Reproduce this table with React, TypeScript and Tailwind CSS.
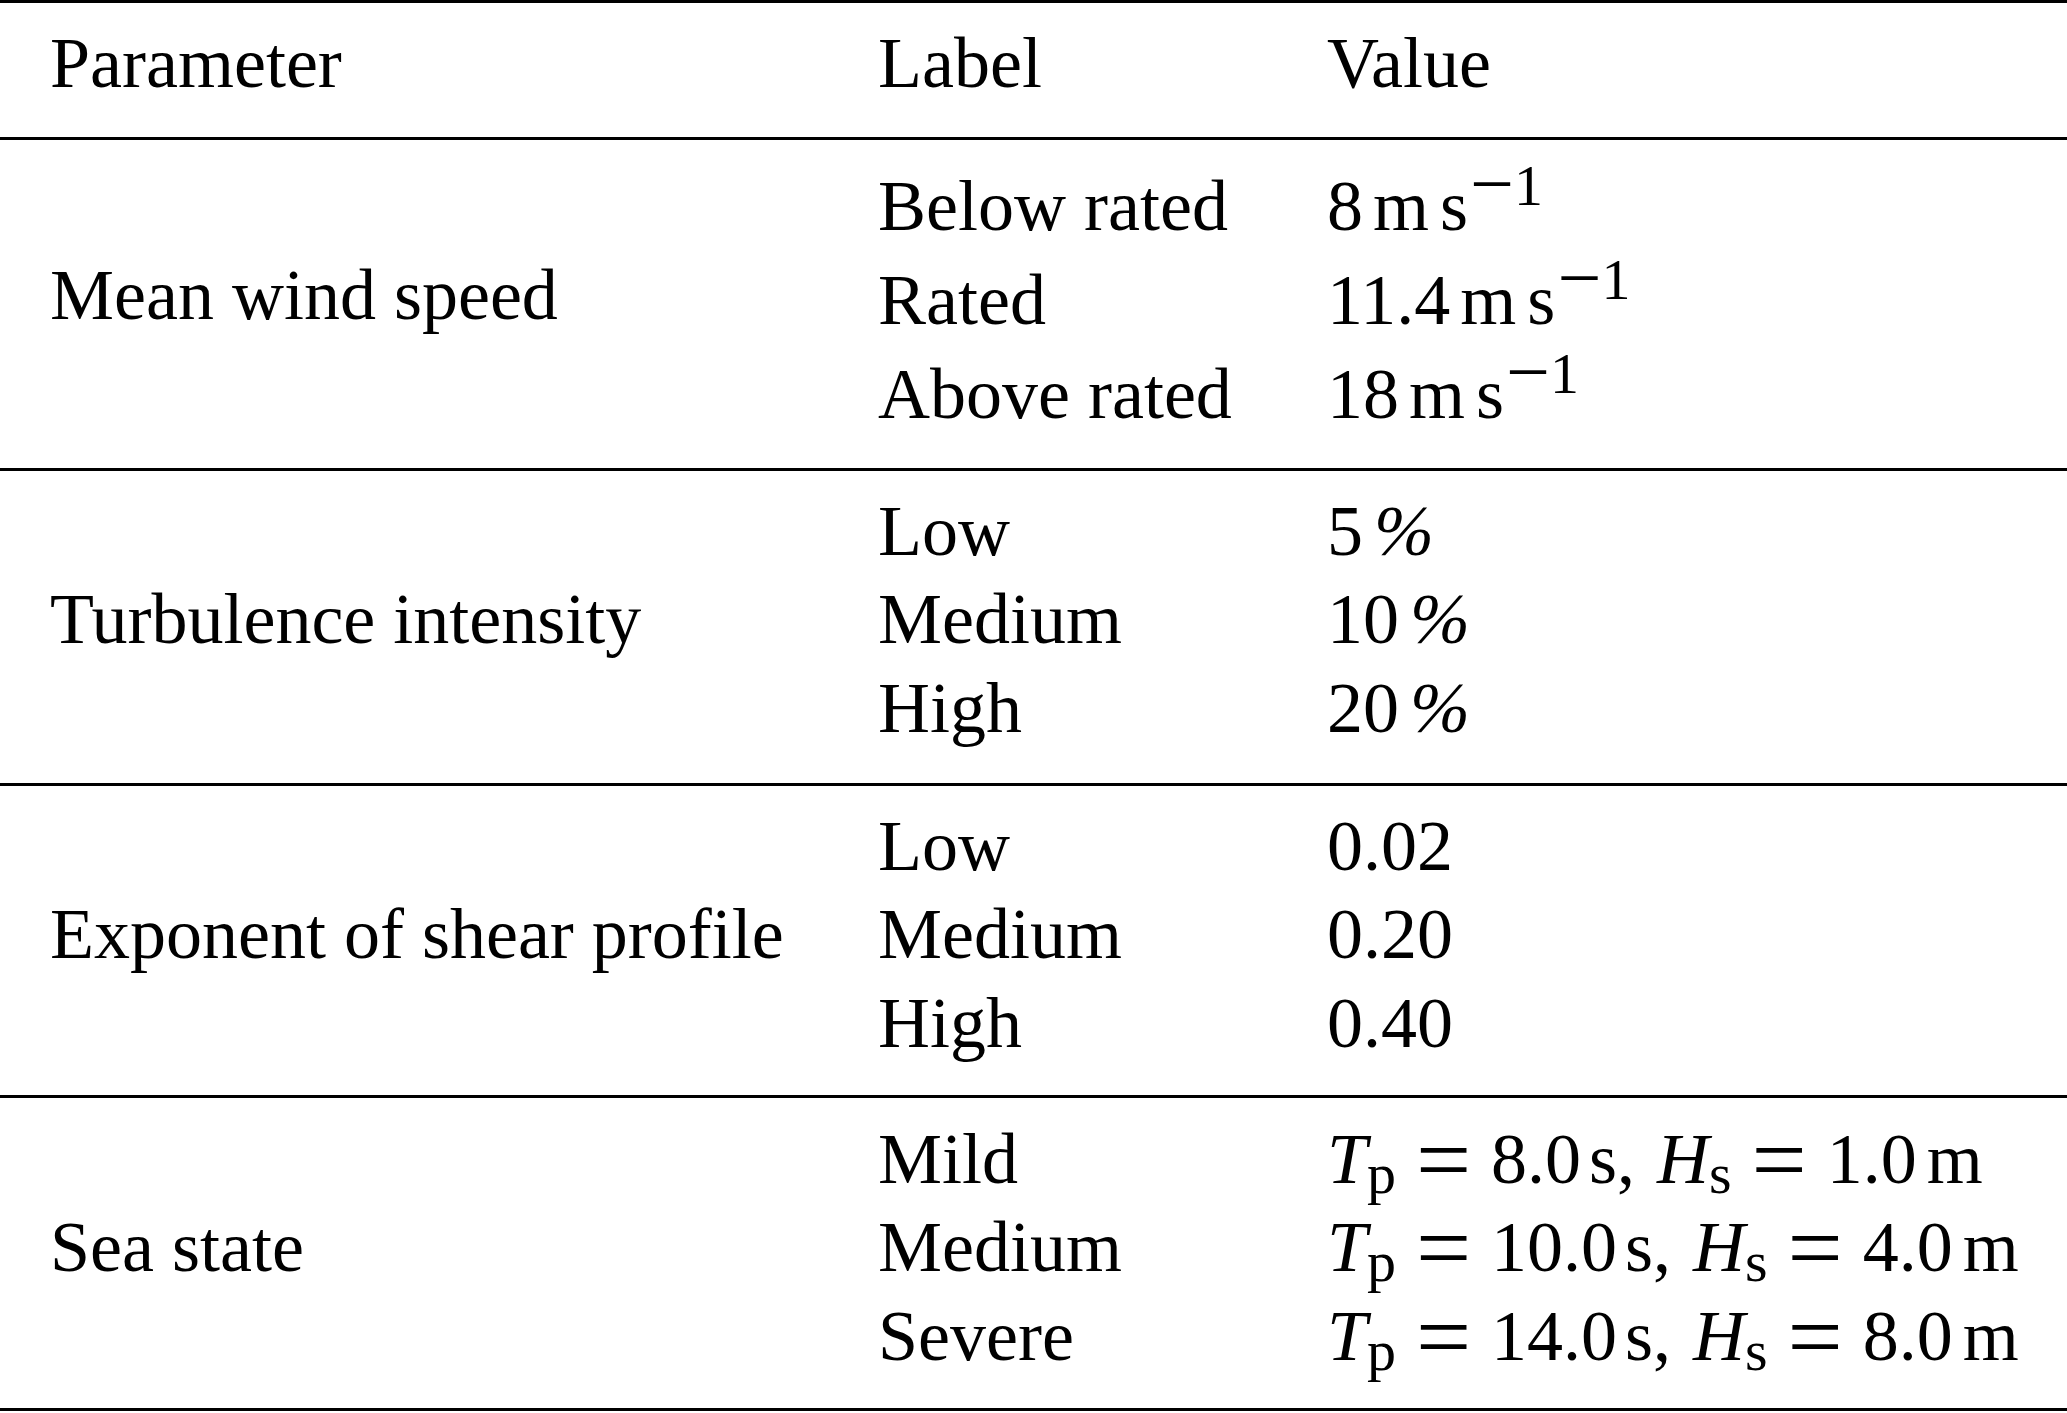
import { Fragment } from 'react';
import type { ReactNode } from 'react';

// thin rule between table blocks
function Rule() {
  return <div className="h-[3px] bg-black" />;
}

function Sub({ children }: { children: ReactNode }) {
  return <span className="text-[58px] leading-[0] align-[-10px]">{children}</span>;
}

function Eq() {
  return (
    <span className="inline-block w-[95px] text-center text-[98px] leading-[0] align-[-9px]">=</span>
  );
}

function PerSecond({ n }: { n: string }) {
  return (
    <>
      {n}
      <span className="ml-[10px]">m</span>
      <span className="ml-[11px]">s</span>
      <span className="ml-[2px] text-[78px] leading-[0] align-[20px]">−</span>
      <span className="text-[58px] leading-[0] align-[25px]">1</span>
    </>
  );
}

function Percent({ n }: { n: string }) {
  return (
    <>
      {n}
      <span className="ml-[11px] italic">%</span>
    </>
  );
}

function Sea({ tp, hs }: { tp: string; hs: string }) {
  return (
    <>
      <span className="italic">T</span>
      <Sub>p</Sub>
      <Eq />
      {tp}
      <span className="ml-[8px]">s</span>,
      <span className="ml-[22px] italic">H</span>
      <Sub>s</Sub>
      <Eq />
      {hs}
      <span className="ml-[10px]">m</span>
    </>
  );
}

type Row = [string, ReactNode];

function Block({
  name,
  rows,
  className,
  nameClass = '',
}: {
  name: string;
  rows: Row[];
  className: string;
  nameClass?: string;
}) {
  return (
    <div className={`grid grid-cols-[828px_449px_1fr] pl-[50px] ${className}`}>
      <div className={`row-span-3 self-center whitespace-nowrap ${nameClass}`}>{name}</div>
      {rows.map(([label, value]) => (
        <Fragment key={label}>
          <div className="whitespace-nowrap">{label}</div>
          <div className="whitespace-nowrap">{value}</div>
        </Fragment>
      ))}
    </div>
  );
}

export default function App() {
  return (
    <div className="w-[2067px] h-[1413px] bg-white text-black font-['Liberation_Serif','Times_New_Roman',serif] text-[72px]">
      <Rule />
      <div className="grid grid-cols-[828px_449px_1fr] pl-[50px] pt-[16px] pb-[29.5px] leading-[88.5px]">
        <div>Parameter</div>
        <div>Label</div>
        <div>Value</div>
      </div>
      <Rule />
      <Block
        name="Mean wind speed"
        className="pt-[19px] pb-[27px] leading-[94px]"
        nameClass="mb-[10px]"
        rows={[
          ['Below rated', <PerSecond n="8" />],
          ['Rated', <PerSecond n="11.4" />],
          ['Above rated', <PerSecond n="18" />],
        ]}
      />
      <Rule />
      <Block
        name="Turbulence intensity"
        className="pt-[15.5px] pb-[30.5px] leading-[88.5px]"
        rows={[
          ['Low', <Percent n="5" />],
          ['Medium', <Percent n="10" />],
          ['High', <Percent n="20" />],
        ]}
      />
      <Rule />
      <Block
        name="Exponent of shear profile"
        className="pt-[16px] pb-[28px] leading-[88.5px]"
        rows={[
          ['Low', '0.02'],
          ['Medium', '0.20'],
          ['High', '0.40'],
        ]}
      />
      <Rule />
      <Block
        name="Sea state"
        className="pt-[16.5px] pb-[28px] leading-[88.5px]"
        rows={[
          ['Mild', <Sea tp="8.0" hs="1.0" />],
          ['Medium', <Sea tp="10.0" hs="4.0" />],
          ['Severe', <Sea tp="14.0" hs="8.0" />],
        ]}
      />
      <Rule />
    </div>
  );
}
